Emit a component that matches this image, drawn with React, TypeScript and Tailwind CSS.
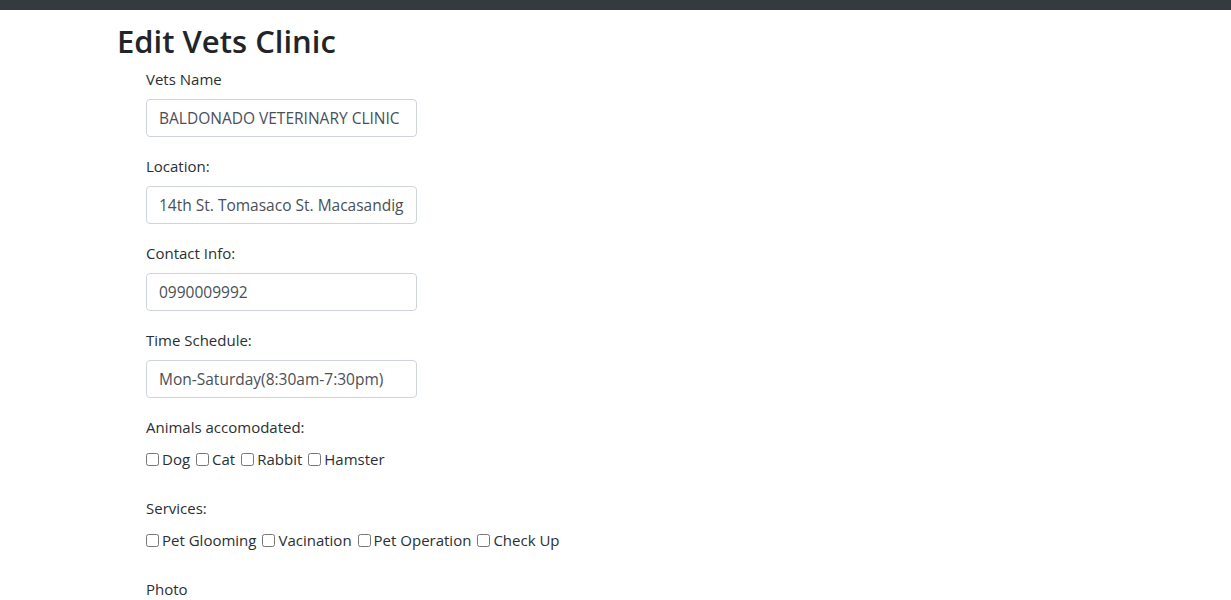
import { useState } from 'react'

const ANIMALS = ['Dog', 'Cat', 'Rabbit', 'Hamster']
const SERVICES = ['Pet Glooming', 'Vacination', 'Pet Operation', 'Check Up']

function Field({ label, value }: { label: string; value: string }) {
  const [v, setV] = useState(value)
  return (
    <div className="mb-[18px]">
      <label className="block leading-[22px] mb-[9px]">{label}</label>
      <input
        value={v}
        onChange={e => setV(e.target.value)}
        className="block w-[271px] h-[38px] px-[12px] rounded-[4px] border border-[#ced4da] text-[15.5px] text-[#495057] bg-white outline-none"
      />
    </div>
  )
}

function Checks({ items }: { items: string[] }) {
  return (
    <div className="flex items-center leading-[22px]">
      {items.map(item => (
        <label key={item} className="flex items-center mr-[6px]">
          <input type="checkbox" className="w-[13px] h-[13px] m-0 mr-[3px]" />
          <span>{item}</span>
        </label>
      ))}
    </div>
  )
}

export default function App() {
  return (
    <div className="min-h-[600px] bg-white text-[#2b2f33] text-[15px] font-['Open_Sans',sans-serif]">
      <div className="h-[10px] bg-[#343a40]" />
      <div className="pl-[117px]">
        <h1 className="text-[31px] font-semibold leading-[38px] mt-[12px] mb-[8px] text-[#212529]">Edit Vets Clinic</h1>
        <form className="pl-[29px]">
          <Field label="Vets Name" value="BALDONADO VETERINARY CLINIC" />
          <Field label="Location:" value="14th St. Tomasaco St. Macasandig, Cagayan de Oro City" />
          <Field label="Contact Info:" value="0990009992" />
          <Field label="Time Schedule:" value="Mon-Saturday(8:30am-7:30pm)" />
          <label className="block leading-[22px] mb-[10px]">Animals accomodated:</label>
          <Checks items={ANIMALS} />
          <label className="block leading-[22px] mt-[27px] mb-[10px]">Services:</label>
          <Checks items={SERVICES} />
          <label className="block leading-[22px] mt-[27px]">Photo</label>
        </form>
      </div>
    </div>
  )
}
